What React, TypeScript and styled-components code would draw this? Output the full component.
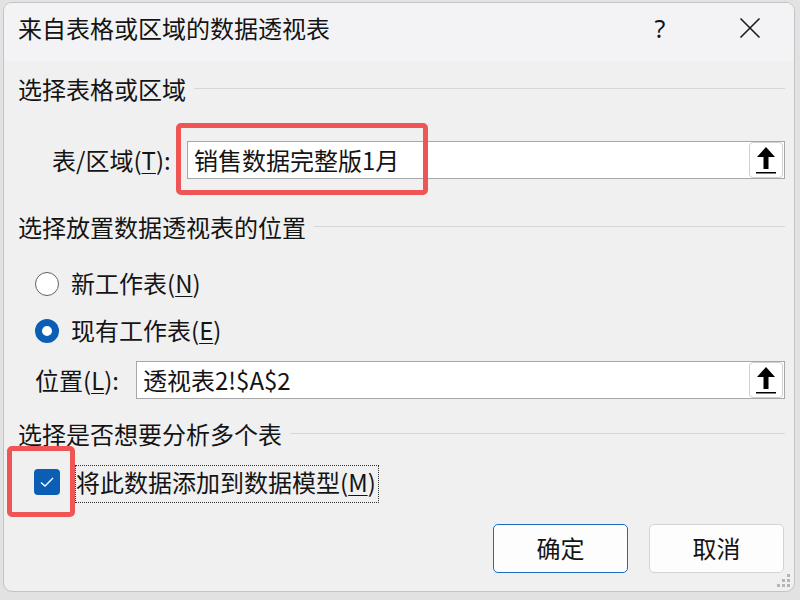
import React from 'react';
import styled, { createGlobalStyle } from 'styled-components';

const GlobalStyle = createGlobalStyle`
  html, body {
    margin: 0;
    padding: 0;
    background: #e2e2e2;
  }
  body {
    font-family: "Noto Sans CJK SC", "Noto Sans", sans-serif;
    color: #141414;
  }
`;

const Stage = styled.div`
  width: 800px;
  height: 600px;
  padding: 2px 5px 8px 3px;
  box-sizing: border-box;
`;

const Dialog = styled.div`
  width: 792px;
  height: 590px;
  box-sizing: border-box;
  border: 1px solid #c4c4c4;
  border-radius: 9px;
  background: #f0f0f0;
  overflow: hidden;
  display: flex;
  flex-direction: column;
  position: relative;
`;

const TitleBar = styled.div`
  height: 58px;
  flex: 0 0 auto;
  display: flex;
  align-items: center;
  padding: 0 14px 8px 14px;
  box-sizing: border-box;
  background: #f3f3f6;
`;

const Title = styled.div`
  flex: 1;
  font-size: 24px;
  line-height: 30px;
`;

const TitleButton = styled.div<{ $gap?: number }>`
  width: 60px;
  margin-left: ${({ $gap }) => $gap ?? 0}px;
  display: flex;
  justify-content: center;
  align-items: center;
  font-size: 25px;
  line-height: 30px;
  font-family: "Noto Sans", sans-serif;
`;

const Body = styled.div`
  flex: 1;
  display: flex;
  flex-direction: column;
  padding: 0 9px 0 14px;
`;

const SectionHeader = styled.div<{ $top: number }>`
  display: flex;
  align-items: center;
  gap: 8px;
  height: 30px;
  margin-top: ${({ $top }) => $top}px;
  font-size: 24px;
  line-height: 30px;

  &::after {
    content: "";
    flex: 1;
    height: 1px;
    background: #d6d6d6;
    margin-top: -1px;
  }
`;

const FieldRow = styled.div<{ $top: number; $indent: number; $gap: number }>`
  position: relative;
  display: flex;
  align-items: center;
  margin-top: ${({ $top }) => $top}px;
  padding-left: ${({ $indent }) => $indent}px;
  gap: ${({ $gap }) => $gap}px;
  font-size: 24px;
`;

const FieldLabel = styled.span<{ $w: number }>`
  width: ${({ $w }) => $w}px;
  white-space: nowrap;
  padding-bottom: 2px;
`;

const Key = styled.span`
  text-decoration: underline;
  text-underline-offset: 3px;
  text-decoration-thickness: 1px;
`;

const InputBox = styled.div`
  flex: 1;
  height: 38px;
  box-sizing: border-box;
  border: 1px solid #a8a8a8;
  background: #fff;
  display: flex;
  align-items: center;
  padding-left: 6px;
  font-size: 24px;
`;

const InputText = styled.span`
  flex: 1;
  padding-bottom: 2px;
`;

const PickButton = styled.div`
  width: 34px;
  height: 36px;
  box-sizing: border-box;
  border: 1px solid #cfcfcf;
  border-radius: 4px;
  background: #fff;
  display: flex;
  align-items: center;
  justify-content: center;
  margin-right: 1px;
`;

const Highlight = styled.div<{ $left: number; $top: number; $w: number; $h: number }>`
  position: absolute;
  left: ${({ $left }) => $left}px;
  top: ${({ $top }) => $top}px;
  width: ${({ $w }) => $w}px;
  height: ${({ $h }) => $h}px;
  box-sizing: border-box;
  border: 5px solid #f05555;
  border-radius: 5px;
  pointer-events: none;
`;

const RadioRow = styled.div<{ $top: number }>`
  display: flex;
  align-items: center;
  gap: 12px;
  height: 30px;
  margin-top: ${({ $top }) => $top}px;
  padding-left: 17px;
  font-size: 24px;
`;

const RadioText = styled.span`
  padding-bottom: 3px;
`;

const RadioDot = styled.span<{ $checked?: boolean }>`
  width: 24px;
  height: 24px;
  box-sizing: border-box;
  border-radius: 50%;
  border: ${({ $checked }) => ($checked ? '7.5px solid #0a5fb4' : '1.5px solid #616161')};
  background: #fff;
`;

const CheckRow = styled.div`
  position: relative;
  display: flex;
  align-items: center;
  margin-top: 16px;
  height: 38px;
  padding-left: 16px;
  font-size: 24px;
`;

const CheckBox = styled.span`
  width: 26px;
  height: 26px;
  border-radius: 4px;
  background: #0a5fb4;
  display: flex;
  align-items: center;
  justify-content: center;
  margin: 0 15px 5px 0;
`;

const FocusLabel = styled.span`
  height: 38px;
  box-sizing: border-box;
  border: 1px dotted #333;
  display: flex;
  align-items: center;
  padding: 0 2px 5px 0;
`;

const ButtonBar = styled.div`
  display: flex;
  justify-content: flex-end;
  gap: 21px;
  margin-top: 21px;
  padding-right: 1px;
`;

const DialogButton = styled.div<{ $primary?: boolean }>`
  width: 135px;
  height: 49px;
  box-sizing: border-box;
  border: 1px solid ${({ $primary }) => ($primary ? '#1a6cbf' : '#d3d3d3')};
  border-radius: 5px;
  background: #fdfdfd;
  display: flex;
  align-items: center;
  justify-content: center;
  font-size: 24px;
  padding-bottom: 2px;
`;

const Grip = styled.svg`
  position: absolute;
  right: 3px;
  bottom: 3px;
`;

const UpArrow = () => (
  <svg width="22" height="30" viewBox="0 0 22 30">
    <path d="M11 2 L20 12 L13.5 12 L13.5 24 L8.5 24 L8.5 12 L2 12 Z" fill="#000" />
    <rect x="1" y="27" width="20" height="1.5" fill="#000" />
  </svg>
);

export default function App() {
  return (
    <Stage>
      <GlobalStyle />
      <Dialog>
        <TitleBar>
          <Title>来自表格或区域的数据透视表</Title>
          <TitleButton>?</TitleButton>
          <TitleButton $gap={30}>
            <svg width="22" height="22" viewBox="0 0 22 22">
              <path d="M1.5 1.5 L20.5 20.5 M20.5 1.5 L1.5 20.5" stroke="#1a1a1a" strokeWidth="1.6" />
            </svg>
          </TitleButton>
        </TitleBar>
        <Body>
          <SectionHeader $top={13}>选择表格或区域</SectionHeader>
          <FieldRow $top={37} $indent={34} $gap={17}>
            <FieldLabel $w={118}>
              表/区域(<Key>T</Key>):
            </FieldLabel>
            <InputBox>
              <InputText>销售数据完整版1月</InputText>
              <PickButton>
                <UpArrow />
              </PickButton>
            </InputBox>
            <Highlight $left={158} $top={-18} $w={252} $h={72} />
          </FieldRow>
          <SectionHeader $top={33}>选择放置数据透视表的位置</SectionHeader>
          <RadioRow $top={27}>
            <RadioDot />
            <RadioText>
              新工作表(<Key>N</Key>)
            </RadioText>
          </RadioRow>
          <RadioRow $top={17}>
            <RadioDot $checked />
            <RadioText>
              现有工作表(<Key>E</Key>)
            </RadioText>
          </RadioRow>
          <FieldRow $top={15} $indent={17} $gap={18}>
            <FieldLabel $w={83}>
              位置(<Key>L</Key>):
            </FieldLabel>
            <InputBox>
              <InputText>透视表2!$A$2</InputText>
              <PickButton>
                <UpArrow />
              </PickButton>
            </InputBox>
          </FieldRow>
          <SectionHeader $top={20}>选择是否想要分析多个表</SectionHeader>
          <CheckRow>
            <CheckBox>
              <svg width="16" height="12" viewBox="0 0 16 12">
                <path d="M2 6.5 L6 10 L14 2" stroke="#fff" strokeWidth="1.4" fill="none" />
              </svg>
            </CheckBox>
            <FocusLabel>
              将此数据添加到数据模型(<Key>M</Key>)
            </FocusLabel>
            <Highlight $left={-11} $top={-19} $w={68} $h={71} />
          </CheckRow>
          <ButtonBar>
            <DialogButton $primary>确定</DialogButton>
            <DialogButton>取消</DialogButton>
          </ButtonBar>
        </Body>
        <Grip width="14" height="14" viewBox="0 0 14 14">
          <rect x="10" y="0" width="3" height="3" fill="#b5b5b5" />
          <rect x="5" y="5" width="3" height="3" fill="#b5b5b5" />
          <rect x="10" y="5" width="3" height="3" fill="#b5b5b5" />
          <rect x="0" y="10" width="3" height="3" fill="#b5b5b5" />
          <rect x="5" y="10" width="3" height="3" fill="#b5b5b5" />
          <rect x="10" y="10" width="3" height="3" fill="#b5b5b5" />
        </Grip>
      </Dialog>
    </Stage>
  );
}
